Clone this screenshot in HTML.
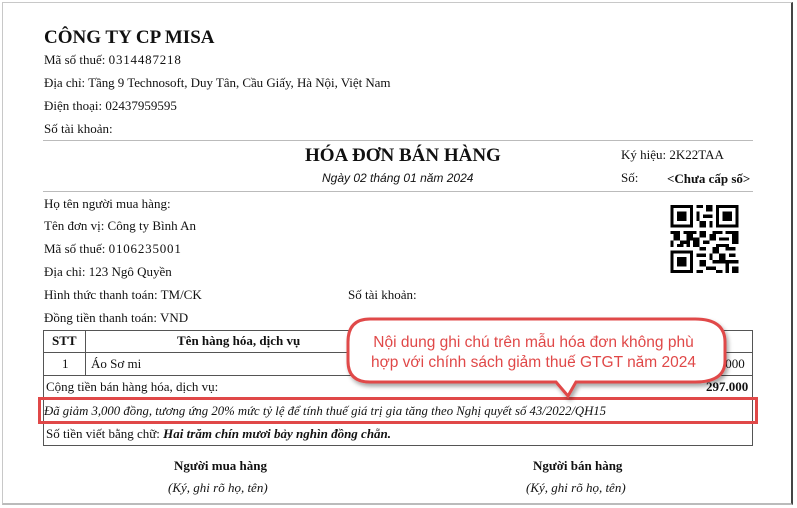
<!DOCTYPE html>
<html><head><meta charset="utf-8"><style>
*{margin:0;padding:0;box-sizing:border-box}
body{width:797px;height:508px;background:#fff;position:relative;overflow:hidden;font-family:"Liberation Serif",serif;color:#111;font-size:13px}
.t{position:absolute;white-space:nowrap;line-height:16px}
.b{font-weight:bold}
.hr{position:absolute;left:43px;width:710px;height:1px;background:#bbb}
.sans{font-family:"Liberation Sans",sans-serif}
</style></head><body>
<div style="position:absolute;left:2px;top:2px;width:791px;height:503px;border:1px solid #c8c8c8;border-right:2px solid #444;border-bottom:2px solid #bbb"></div>

<div class="t b" style="left:44px;top:27px;font-size:19px;line-height:22px">CÔNG TY CP MISA</div>
<div class="t" style="left:44px;top:52px">Mã số thuế: <span style="letter-spacing:0.8px">0314487218</span></div>
<div class="t" style="left:44px;top:75px;letter-spacing:-0.05px">Địa chỉ: Tầng 9 Technosoft, Duy Tân, Cầu Giấy, Hà Nội, Việt Nam</div>
<div class="t" style="left:44px;top:98px">Điện thoại: 02437959595</div>
<div class="t" style="left:44px;top:121px">Số tài khoản:</div>
<div class="hr" style="top:140px"></div>
<div class="t b" style="left:305px;top:145px;font-size:19px;line-height:22px">HÓA ĐƠN BÁN HÀNG</div>
<div class="t sans" style="left:322px;top:170px;font-size:12px;font-style:italic">Ngày 02 tháng 01 năm 2024</div>
<div class="t" style="left:621px;top:147px">Ký hiệu: 2K22TAA</div>
<div class="t" style="left:621px;top:170px">Số:</div>
<div class="t b" style="left:667px;top:171px">&lt;Chưa cấp số&gt;</div>
<div class="hr" style="top:191px"></div>

<div class="t" style="left:44px;top:196px">Họ tên người mua hàng:</div>
<div class="t" style="left:44px;top:218px">Tên đơn vị: Công ty Bình An</div>
<div class="t" style="left:44px;top:241px">Mã số thuế: <span style="letter-spacing:0.8px">0106235001</span></div>
<div class="t" style="left:44px;top:264px">Địa chỉ: 123 Ngô Quyền</div>
<div class="t" style="left:44px;top:287px">Hình thức thanh toán: TM/CK</div>
<div class="t" style="left:348px;top:287px">Số tài khoản:</div>
<div class="t" style="left:44px;top:310px">Đồng tiền thanh toán: VND</div>

<svg style="position:absolute;left:670px;top:205px" width="69" height="68" viewBox="0 0 21 21" shape-rendering="crispEdges">
<g fill="#000">
<path d="M0 0h7v7h-7zM1 1v5h5v-5zM2 2h3v3h-3z" fill-rule="evenodd"/>
<path d="M14 0h7v7h-7zM15 1v5h5v-5zM16 2h3v3h-3z" fill-rule="evenodd"/>
<path d="M0 14h7v7h-7zM1 15v5h5v-5zM2 16h3v3h-3z" fill-rule="evenodd"/>
<rect x="8" y="0" width="2" height="1"/><rect x="11" y="0" width="2" height="2"/><rect x="8" y="2" width="1" height="3"/><rect x="10" y="3" width="3" height="1"/><rect x="9" y="5" width="2" height="2"/><rect x="12" y="5" width="1" height="2"/>
<rect x="0" y="8" width="3" height="1"/><rect x="4" y="8" width="4" height="1"/><rect x="9" y="8" width="2" height="2"/><rect x="13" y="8" width="3" height="1"/><rect x="17" y="8" width="4" height="1"/>
<rect x="1" y="9" width="2" height="2"/><rect x="5" y="9" width="2" height="2"/><rect x="12" y="9" width="2" height="2"/><rect x="15" y="10" width="3" height="1"/><rect x="19" y="9" width="2" height="3"/>
<rect x="0" y="11" width="1" height="2"/><rect x="3" y="11" width="3" height="1"/><rect x="7" y="10" width="2" height="3"/><rect x="10" y="11" width="2" height="1"/><rect x="14" y="12" width="4" height="1"/>
<rect x="2" y="12" width="2" height="1"/><rect x="5" y="12" width="1" height="1"/><rect x="9" y="13" width="2" height="1"/><rect x="13" y="13" width="2" height="2"/><rect x="17" y="13" width="3" height="1"/>
<rect x="8" y="15" width="3" height="1"/><rect x="12" y="15" width="1" height="2"/><rect x="15" y="15" width="2" height="3"/><rect x="18" y="15" width="2" height="1"/>
<rect x="9" y="17" width="2" height="2"/><rect x="13" y="17" width="8" height="1"/><rect x="11" y="19" width="3" height="1"/><rect x="17" y="18" width="1" height="3"/><rect x="19" y="19" width="2" height="2"/><rect x="8" y="20" width="2" height="1"/><rect x="14" y="20" width="2" height="1"/>
</g></svg>

<!-- table -->
<div style="position:absolute;left:43px;top:330px;width:710px;height:116px;border:1px solid #555"></div>
<div style="position:absolute;left:43px;top:352px;width:710px;height:1px;background:#555"></div>
<div style="position:absolute;left:43px;top:375px;width:710px;height:1px;background:#555"></div>
<div style="position:absolute;left:85px;top:330px;width:1px;height:45px;background:#555"></div>
<div style="position:absolute;left:43px;top:422px;width:710px;height:1px;background:#555"></div>
<div class="t b" style="left:52px;top:333px">STT</div>
<div class="t b" style="left:177px;top:333px">Tên hàng hóa, dịch vụ</div>
<div class="t" style="left:62px;top:356px">1</div>
<div class="t" style="left:91px;top:356px">Áo Sơ mi</div>
<div class="t" style="left:722px;top:356px">.000</div>
<div class="t" style="left:46px;top:379px">Cộng tiền bán hàng hóa, dịch vụ:</div>
<div class="t b" style="left:706px;top:379px">297.000</div>
<div class="t" style="left:44px;top:403px;font-style:italic;font-size:12.75px">Đã giảm 3,000 đồng, tương ứng 20% mức tỷ lệ để tính thuế giá trị gia tăng theo Nghị quyết số 43/2022/QH15</div>
<div class="t" style="left:46px;top:426px">Số tiền viết bằng chữ: <b><i>Hai trăm chín mươi bảy nghìn đồng chẵn.</i></b></div>
<div style="position:absolute;left:38px;top:397px;width:720px;height:27px;border:3px solid #e04848"></div>

<div class="t b" style="left:174px;top:458px">Người mua hàng</div>
<div class="t" style="left:168px;top:480px;font-style:italic">(Ký, ghi rõ họ, tên)</div>
<div class="t b" style="left:533px;top:458px">Người bán hàng</div>
<div class="t" style="left:526px;top:480px;font-style:italic">(Ký, ghi rõ họ, tên)</div>

<!-- callout -->
<svg style="position:absolute;left:340px;top:312px" width="395" height="92">
<defs><filter id="s" x="-10%" y="-10%" width="120%" height="130%"><feDropShadow dx="2" dy="3" stdDeviation="2" flood-color="#000" flood-opacity="0.35"/></filter></defs>
<path d="M30 7 H355 Q385 7 385 30 V49 Q385 70 355 70 H236 L228 84 L216 70 H30 Q8 70 8 49 V30 Q8 7 30 7 Z" fill="#fff" stroke="#e04848" stroke-width="3" filter="url(#s)"/>
</svg>
<div class="t sans" style="left:341px;top:333px;width:385px;text-align:center;color:#e04848;font-size:15.5px;line-height:20px">Nội dung ghi chú trên mẫu hóa đơn không phù<br>hợp với chính sách giảm thuế GTGT năm 2024</div>
</body></html>
